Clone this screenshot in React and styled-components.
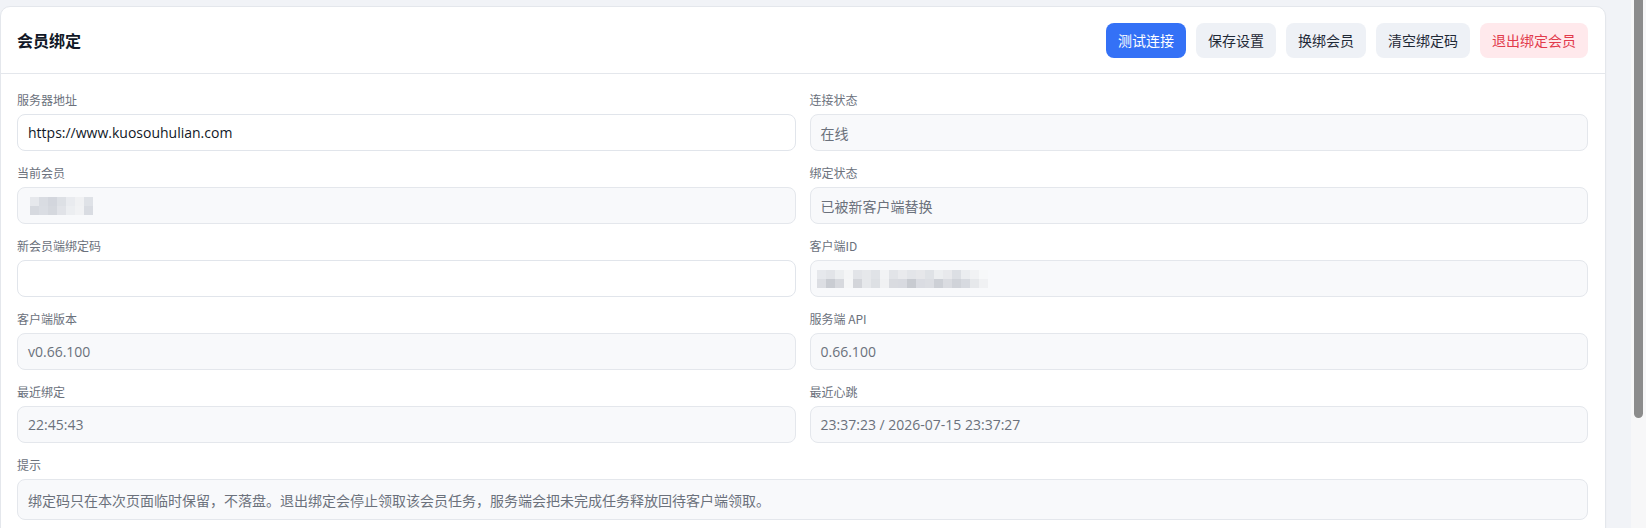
import React from 'react'
import styled, { createGlobalStyle } from 'styled-components'

const GlobalStyle = createGlobalStyle`
  html, body {
    margin: 0;
    padding: 0;
    height: 100%;
    overflow: hidden;
  }
  body {
    font-family: "Open Sans", "Noto Sans CJK SC", sans-serif;
    color: #1f2937;
  }
`

const Shell = styled.div`
  display: flex;
  height: 100vh;
  background: #f1f3f7;
`

const Main = styled.main`
  flex: 1;
  min-width: 0;
  overflow: hidden;
  padding: 6px 25px 0 0;
`

/* drawn scrollbar: the headless window hides native ones */
const ScrollTrack = styled.div`
  width: 15px;
  flex: none;
  background: #f7f7f8;
  display: flex;
  justify-content: center;
`

const ScrollThumb = styled.div`
  width: 9px;
  height: 418px;
  background: #8c8c8c;
  border-radius: 0 0 5px 5px;
`

const Card = styled.section`
  background: #fff;
  border: 1px solid #e4e7ec;
  border-radius: 10px;
  box-shadow: 0 1px 2px rgba(16, 24, 40, 0.03);
`

const Header = styled.header`
  height: 66px;
  display: flex;
  align-items: center;
  justify-content: space-between;
  padding: 0 17px 0 16px;
  border-bottom: 1px solid #e4e7ec;
`

const Title = styled.h2`
  margin: 0;
  font-size: 16px;
  font-weight: 700;
  color: #111827;
  font-family: "Noto Sans CJK SC", sans-serif;
`

const Actions = styled.div`
  display: flex;
  gap: 10px;
`

const tones = {
  primary: { bg: '#3471f6', fg: '#ffffff' },
  plain: { bg: '#eef1f6', fg: '#1f2937' },
  danger: { bg: '#ffe9ec', fg: '#e23b4c' },
}

const Button = styled.button`
  height: 35px;
  padding: 0 12px;
  border: none;
  border-radius: 8px;
  font-family: "Noto Sans CJK SC", sans-serif;
  font-size: 14px;
  cursor: pointer;
  background: ${p => tones[p.$tone].bg};
  color: ${p => tones[p.$tone].fg};
`

const Body = styled.div`
  display: grid;
  grid-template-columns: 1fr 1fr;
  column-gap: 14px;
  row-gap: 13px;
  padding: 17px 17px 17px 16px;
`

const Field = styled.div`
  display: flex;
  flex-direction: column;
  gap: 6px;
  grid-column: ${p => (p.$wide ? '1 / -1' : 'auto')};
`

const Label = styled.label`
  font-family: "Noto Sans CJK SC", sans-serif;
  font-size: 12px;
  line-height: 17px;
  height: 17px;
  color: #6b717c;
`

const Input = styled.input`
  box-sizing: border-box;
  height: 37px;
  width: 100%;
  padding: 0 10px;
  border: 1px solid #e1e5eb;
  border-radius: 8px;
  background: #fff;
  font-family: "Open Sans", "Noto Sans CJK SC", sans-serif;
  font-size: 14px;
  color: #111827;
  outline: none;
`

const Value = styled.div`
  box-sizing: border-box;
  height: ${p => (p.$tall ? '41px' : '37px')};
  display: flex;
  align-items: center;
  padding: 0 10px;
  border: 1px solid #e4e7ec;
  border-radius: 8px;
  background: #f8f9fb;
  font-family: "Open Sans", "Noto Sans CJK SC", sans-serif;
  font-size: 14px;
  color: #6b717c;
  white-space: nowrap;
  overflow: hidden;
`

const Mosaic = styled.div`
  display: flex;
  flex-direction: column;
  margin-left: ${p => p.$shift}px;
`

const MosaicRow = styled.div`
  display: flex;
`

const Block = styled.span`
  width: 9px;
  height: 9px;
  background: ${p => p.$shade};
`

const memberShades = [
  ['#e6e8ec', '#d9dce2', '#d3d6dd', '#dde0e5', '#e9ebef', '#f0f1f3', '#dfe2e7'],
  ['#d6d9df', '#dadde3', '#d5d8de', '#e1e3e8', '#eceef1', '#f1f2f4', '#d9dce2'],
]

const clientShades = [
  ['#e6e8ec', '#e2e4e8', '#eceef0', '#f4f5f6', '#e2e4e8', '#e6e8eb', '#e0e3e7', '#f2f3f5', '#e2e4e8', '#e9eaed', '#e3e5e9', '#e6e7ea', '#dfe2e6', '#eceef0', '#e8e9ec', '#dcdfe4', '#ebedf0', '#f1f2f4', '#f7f8f9'],
  ['#dcdee3', '#c9ccd2', '#d7d9de', '#f5f6f7', '#d3d5da', '#e6e8eb', '#dde0e4', '#f0f1f3', '#d9dbe0', '#d8dae0', '#c8cbd1', '#dadce2', '#dcdee3', '#cdd0d6', '#dadce1', '#d0d3d9', '#d7dae0', '#e6e8eb', '#f0f1f3'],
]

const Blurred = ({ shades, shift }) => (
  <Mosaic $shift={shift}>
    {shades.map((row, i) => (
      <MosaicRow key={i}>
        {row.map((c, j) => <Block key={j} $shade={c} />)}
      </MosaicRow>
    ))}
  </Mosaic>
)

const App = () => {
  return (
    <Shell>
      <GlobalStyle />
      <Main>
        <Card>
          <Header>
            <Title>会员绑定</Title>
            <Actions>
              <Button $tone="primary">测试连接</Button>
              <Button $tone="plain">保存设置</Button>
              <Button $tone="plain">换绑会员</Button>
              <Button $tone="plain">清空绑定码</Button>
              <Button $tone="danger">退出绑定会员</Button>
            </Actions>
          </Header>

          <Body>
            <Field>
              <Label>服务器地址</Label>
              <Input defaultValue="https://www.kuosouhulian.com" />
            </Field>
            <Field>
              <Label>连接状态</Label>
              <Value>在线</Value>
            </Field>

            <Field>
              <Label>当前会员</Label>
              <Value><Blurred shades={memberShades} shift={2} /></Value>
            </Field>
            <Field>
              <Label>绑定状态</Label>
              <Value>已被新客户端替换</Value>
            </Field>

            <Field>
              <Label>新会员端绑定码</Label>
              <Input defaultValue="" />
            </Field>
            <Field>
              <Label>客户端ID</Label>
              <Value><Blurred shades={clientShades} shift={-4} /></Value>
            </Field>

            <Field>
              <Label>客户端版本</Label>
              <Value>v0.66.100</Value>
            </Field>
            <Field>
              <Label>服务端 API</Label>
              <Value>0.66.100</Value>
            </Field>

            <Field>
              <Label>最近绑定</Label>
              <Value>22:45:43</Value>
            </Field>
            <Field>
              <Label>最近心跳</Label>
              <Value>23:37:23 / 2026-07-15 23:37:27</Value>
            </Field>

            <Field $wide>
              <Label>提示</Label>
              <Value $tall>绑定码只在本次页面临时保留，不落盘。退出绑定会停止领取该会员任务，服务端会把未完成任务释放回待客户端领取。</Value>
            </Field>
          </Body>
        </Card>
      </Main>
      <ScrollTrack>
        <ScrollThumb />
      </ScrollTrack>
    </Shell>
  )
}

export default App
